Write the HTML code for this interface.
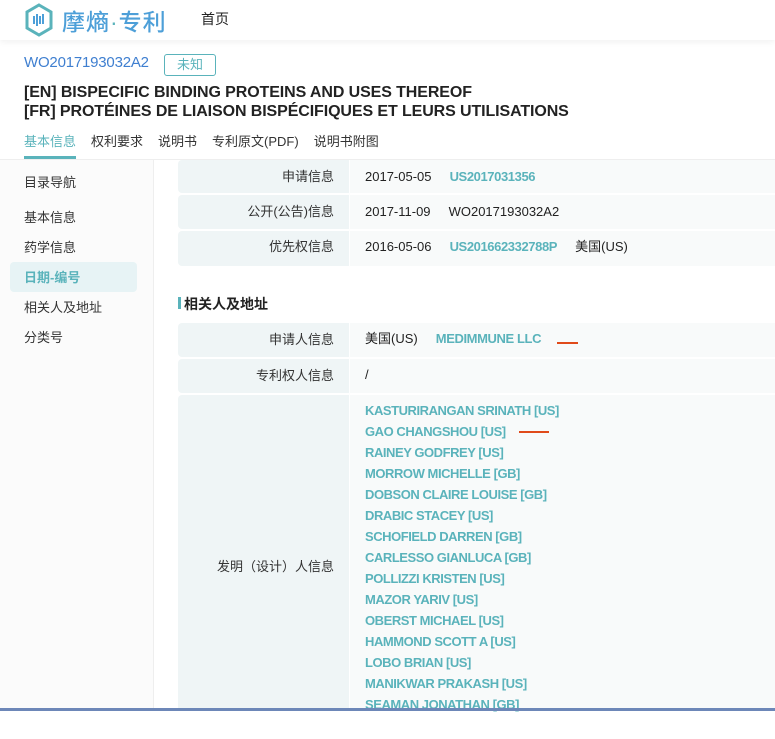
<!DOCTYPE html>
<html><head><meta charset="utf-8"><style>
*{margin:0;padding:0;box-sizing:border-box}
body{width:775px;height:711px;overflow:hidden;background:#fff;font-family:"Liberation Sans","Noto Sans CJK SC",sans-serif;position:relative;color:#222}
.abs{position:absolute}
.hdr{left:0;top:0;width:775px;height:40px;background:#fff;box-shadow:0 2px 6px rgba(0,0,0,.06)}
.logo{left:62px;top:3px;font-size:23px;color:#4d9fd8;letter-spacing:1px;font-weight:500}
.teal{color:#5ab3bb}
.lab{left:178px;width:171px;background:#eff5f6;text-align:right;padding-right:15px;font-size:13px;color:#333;border-radius:4px 0 0 4px}
.val{left:350px;width:425px;background:#f8fafa;padding-left:15px;font-size:13px;color:#222}
.side div{position:absolute;left:24px;font-size:13px;color:#333}
.lk{color:#5ab3bb;font-weight:bold;letter-spacing:-0.4px}
.inv div{height:21px;line-height:21px;color:#5ab3bb;font-size:13px;font-weight:bold;letter-spacing:-0.45px}
.arrow{height:2px;background:#e04a1a}
.tabs span{margin-right:15px}
</style></head><body>
<div class="abs hdr"></div>
<svg class="abs" style="left:24px;top:3px" width="30" height="34" viewBox="0 0 30 34"><path d="M15 2 L27 9 V25 L15 32 L3 25 V9 Z" fill="none" stroke="#5ab3bb" stroke-width="3"/><g stroke="#4d9fd8" stroke-width="2"><path d="M10 13v8M13 11v12M16 13v8M19 11v10"/></g></svg>
<div class="abs logo">摩熵<span style="color:#5ab3bb">·</span>专利</div>
<div class="abs" style="left:201px;top:9px;font-size:14px;color:#222">首页</div>
<div class="abs" style="left:24px;top:54px;font-size:15px;color:#3f7fd0;letter-spacing:-0.2px">WO2017193032A2</div>
<div class="abs" style="left:164px;top:54px;width:52px;height:22px;border:1px solid #5ab3bb;border-radius:3px;color:#5ab3bb;font-size:13px;text-align:center;line-height:20px">未知</div>
<div class="abs" style="left:24px;top:83px;font-size:16px;font-weight:bold;color:#222;line-height:19px;letter-spacing:-0.1px">[EN] BISPECIFIC BINDING PROTEINS AND USES THEREOF<br>[FR] PROTÉINES DE LIAISON BISPÉCIFIQUES ET LEURS UTILISATIONS</div>
<div class="abs tabs" style="left:24px;top:131px;font-size:13px;color:#333"><span class="teal">基本信息</span><span>权利要求</span><span>说明书</span><span>专利原文(PDF)</span><span>说明书附图</span></div>
<div class="abs" style="left:24px;top:156px;width:52px;height:3px;background:#5ab3bb"></div>
<div class="abs" style="left:0;top:159px;width:775px;height:1px;background:#eee"></div>
<div class="abs side" style="left:0;top:160px;width:154px;height:551px;background:#fbfbfb;border-right:1px solid #eee">
<div style="top:12px">目录导航</div>
<div style="top:47px">基本信息</div>
<div style="top:77px">药学信息</div>
<div style="left:10px;top:102px;width:127px;height:30px;background:#e7f3f5;border-radius:4px"></div>
<div style="top:107px;color:#5ab3bb;font-weight:bold">日期-编号</div>
<div style="top:137px">相关人及地址</div>
<div style="top:167px">分类号</div>
</div>
<div class="abs lab" style="top:160px;height:33px;line-height:33px">申请信息</div>
<div class="abs val" style="top:160px;height:33px;line-height:33px">2017-05-05&nbsp;&nbsp;&nbsp;&nbsp;&nbsp;<span class="lk">US2017031356</span></div>
<div class="abs lab" style="top:195px;height:34px;line-height:34px">公开(公告)信息</div>
<div class="abs val" style="top:195px;height:34px;line-height:34px">2017-11-09&nbsp;&nbsp;&nbsp;&nbsp;&nbsp;WO2017193032A2</div>
<div class="abs lab" style="top:231px;height:35px;line-height:32px">优先权信息</div>
<div class="abs val" style="top:231px;height:35px;line-height:32px">2016-05-06&nbsp;&nbsp;&nbsp;&nbsp;&nbsp;<span class="lk">US201662332788P</span>&nbsp;&nbsp;&nbsp;&nbsp;&nbsp;美国(US)</div>
<div class="abs" style="left:178px;top:297px;width:3px;height:12px;background:#5ab3bb"></div>
<div class="abs" style="left:184px;top:294px;font-size:14px;font-weight:bold">相关人及地址</div>
<div class="abs lab" style="top:323px;height:34px;line-height:34px">申请人信息</div>
<div class="abs val" style="top:323px;height:34px;line-height:32px">美国(US)&nbsp;&nbsp;&nbsp;&nbsp;&nbsp;<span class="lk">MEDIMMUNE LLC</span></div>
<div class="abs arrow" style="left:557px;top:342px;width:21px"></div>
<div class="abs lab" style="top:359px;height:34px;line-height:34px">专利权人信息</div>
<div class="abs val" style="top:359px;height:34px;line-height:32px">/</div>
<div class="abs lab" style="top:395px;height:316px;line-height:344px">发明（设计）人信息</div>
<div class="abs val inv" style="top:395px;height:316px;padding-top:5px">
<div>KASTURIRANGAN SRINATH [US]</div><div>GAO CHANGSHOU [US]</div><div>RAINEY GODFREY [US]</div><div>MORROW MICHELLE [GB]</div><div>DOBSON CLAIRE LOUISE [GB]</div><div>DRABIC STACEY [US]</div><div>SCHOFIELD DARREN [GB]</div><div>CARLESSO GIANLUCA [GB]</div><div>POLLIZZI KRISTEN [US]</div><div>MAZOR YARIV [US]</div><div>OBERST MICHAEL [US]</div><div>HAMMOND SCOTT A [US]</div><div>LOBO BRIAN [US]</div><div>MANIKWAR PRAKASH [US]</div><div>SEAMAN JONATHAN [GB]</div>
</div>
<div class="abs arrow" style="left:519px;top:431px;width:30px"></div>
<div class="abs" style="left:0;top:708px;width:775px;height:3px;background:#6d87b8"></div>
</body></html>
